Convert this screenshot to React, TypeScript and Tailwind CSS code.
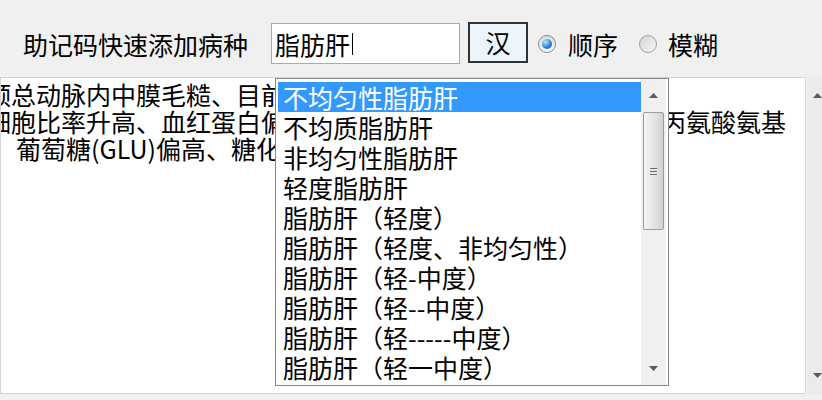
import React from 'react';

const items = [
  '不均匀性脂肪肝',
  '不均质脂肪肝',
  '非均匀性脂肪肝',
  '轻度脂肪肝',
  '脂肪肝（轻度）',
  '脂肪肝（轻度、非均匀性）',
  '脂肪肝（轻-中度）',
  '脂肪肝（轻--中度）',
  '脂肪肝（轻-----中度）',
  '脂肪肝（轻一中度）',
];

const Up = () => (
  <svg width="9" height="5" viewBox="0 0 9 5">
    <path d="M0 5 L4.5 0 L9 5 Z" fill="#5a5a5a" />
  </svg>
);

const Down = () => (
  <svg width="9" height="5" viewBox="0 0 9 5">
    <path d="M0 0 L9 0 L4.5 5 Z" fill="#5a5a5a" />
  </svg>
);

const App = () => {
  return (
    <div className="relative w-[822px] h-[400px] overflow-hidden bg-[#f0f0f0] text-black font-['Noto_Sans_CJK_SC',sans-serif]">
      {/* top bar */}
      <div className="flex items-center h-[77px] pl-[23px] pt-[10px]">
        <span className="text-[25px] leading-[30px]">助记码快速添加病种</span>
        <div className="ml-[23px] w-[189px] h-[41px] bg-white border border-[#7eb4ea] flex items-center pl-[3px]">
          <span className="text-[25px] leading-[30px]">脂肪肝</span>
          <span className="ml-[2px] w-px h-[22px] bg-black"></span>
        </div>
        <div className="ml-[8px] mb-[3px] w-[60px] h-[41px] border-2 border-[#333] bg-[#edf5fc] flex items-center justify-center">
          <span className="text-[25px] leading-[30px]">汉</span>
        </div>
        <div className="ml-[10px] w-[18px] h-[18px] rounded-full border border-[#8a8a8a] bg-gradient-to-b from-[#dcdcdc] to-[#fbfbfb] flex items-center justify-center">
          <div className="w-[10px] h-[10px] rounded-full bg-[radial-gradient(circle_at_35%_30%,#bfe6ff,#2b86d8_55%,#0c4a94)]"></div>
        </div>
        <span className="ml-[12px] text-[25px] leading-[30px]">顺序</span>
        <div className="ml-[21px] w-[18px] h-[18px] rounded-full border border-[#a0a0a0] bg-gradient-to-br from-[#d2d2d2] to-[#fafafa]"></div>
        <span className="ml-[11px] text-[25px] leading-[30px]">模糊</span>
      </div>

      {/* memo area */}
      <div className="flex h-[317px]">
        <div className="w-[810px] h-full bg-white border border-[#d5d5d5] overflow-hidden pt-[3px]">
          <div className="ml-[-15px] text-[25px] leading-[27px] whitespace-nowrap">
            <div>颈总动脉内中膜毛糙、目前未见明显斑块。</div>
            <div>细胞比率升高、血红蛋白偏低、平均红细胞体积偏低、谷草、丙氨酸氨基</div>
            <div className="ml-[5px]">、葡萄糖(GLU)偏高、糖化血红蛋白偏高</div>
          </div>
        </div>
        <div className="flex-1 h-full bg-[#ebebeb] border-l border-[#f7f7f7] flex flex-col justify-between pl-[6px] py-[16px]">
          <Up />
          <Down />
        </div>
      </div>

      {/* suggestion dropdown */}
      <div className="absolute left-[275px] top-[78px] w-[394px] h-[308px] bg-white border border-[#828790] flex">
        <div className="w-[365px] pl-[2px] pt-[3px]">
          {items.map((item, i) => (
            <div
              key={i}
              className={
                i === 0
                  ? 'h-[30px] leading-[30px] pl-[5px] text-[25px] whitespace-nowrap bg-[#3399ff] text-white'
                  : 'h-[30px] leading-[30px] pl-[5px] text-[25px] whitespace-nowrap'
              }
            >
              {item}
            </div>
          ))}
        </div>
        <div className="w-[25px] h-full bg-[#f0f0f0] flex flex-col items-center py-[2px]">
          <div className="h-[29px] flex items-center justify-center">
            <Up />
          </div>
          <div className="w-[21px] h-[118px] mt-[2px] rounded-[2px] border border-[#9c9c9c] bg-gradient-to-r from-[#f4f4f4] via-[#e6e6e6] to-[#d0d0d0] flex flex-col items-center justify-center gap-[2px]">
            <div className="w-[7px] h-px bg-[#6e6e6e]"></div>
            <div className="w-[7px] h-px bg-[#6e6e6e]"></div>
            <div className="w-[7px] h-px bg-[#6e6e6e]"></div>
          </div>
          <div className="flex-1"></div>
          <div className="h-[29px] flex items-center justify-center">
            <Down />
          </div>
        </div>
      </div>
    </div>
  );
};

export default App;
